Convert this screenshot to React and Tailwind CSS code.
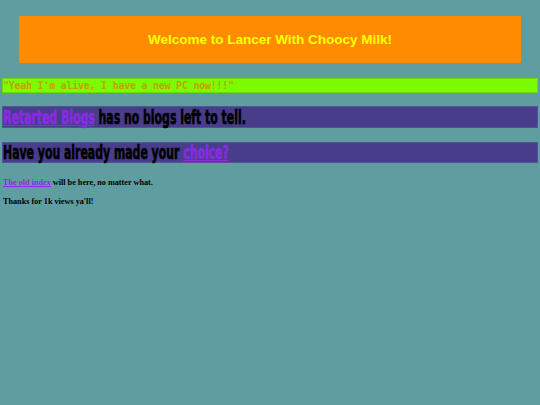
import React from 'react';

const App = () => {
    return (
        <div className="min-h-screen bg-[#5f9ea0] px-[3px] pt-[16px]">
            {/* Header */}
            <div className="mx-[16px] h-[47px] bg-[#ff8c00] flex items-center justify-center shadow-[0_0_1px_#c08020]">
                <h1 className="text-[13.5px] font-bold text-[#ffff00] font-['Liberation_Sans',Arial,sans-serif] mt-[2px]">
                    Welcome to Lancer With Choocy Milk!
                </h1>
            </div>

            <div className="mt-[16px] h-[13px] bg-[#7cfc00] shadow-[0_0_0_1px_#6fd800] flex items-center">
                <p className="text-[10px] leading-none font-bold text-[#c4a000] font-['DejaVu_Sans_Mono',monospace] tracking-[-0.25px]">
                    "Yeah I'm alive, I have a new PC now!!!"
                </p>
            </div>

            <div className="mt-[15px] h-[20px] bg-[#483d8b] shadow-[0_0_0_1px_#5a509a] flex items-center">
                <p className="text-[19px] leading-none font-bold text-black font-['DejaVu_Sans',sans-serif] whitespace-nowrap origin-left scale-x-[0.574] [-webkit-text-stroke:0.7px_currentcolor]">
                    <a href="#" className="text-[#8a2be2] underline">Retarted Blogs</a> has no blogs left to tell.
                </p>
            </div>

            <div className="mt-[16px] h-[19px] bg-[#483d8b] shadow-[0_0_0_1px_#5a509a] flex items-center">
                <p className="text-[19px] leading-none font-bold text-black font-['DejaVu_Sans',sans-serif] whitespace-nowrap origin-left scale-x-[0.574] [-webkit-text-stroke:0.7px_currentcolor]">
                    Have you already made your <a href="#" className="text-[#8a2be2] underline">choice?</a>
                </p>
            </div>

            <div className="font-['Liberation_Serif',serif] text-[8.2px] font-bold text-black">
                <p className="mt-[15px]">
                    <a href="#" className="text-[#8a2be2] underline">The old index</a> will be here, no matter what.
                </p>
                <p className="mt-[7px]">Thanks for 1k views ya'll!</p>
            </div>
        </div>
    );
};

export default App;
